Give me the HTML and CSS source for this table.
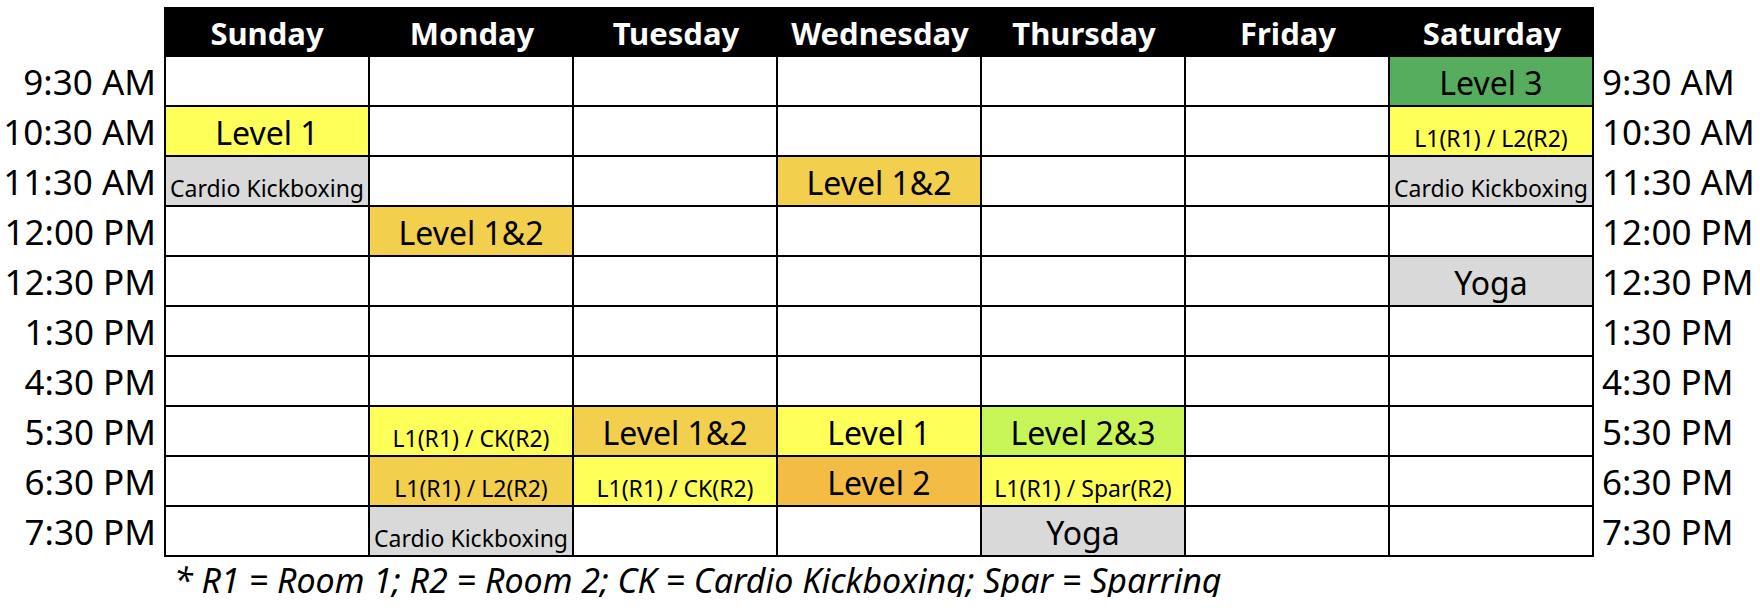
FILE: index.html
```html
<!DOCTYPE html>
<html lang="en">
<head>
<meta charset="utf-8">
<title>Class Schedule</title>
<link rel="stylesheet" href="styles.css">
</head>
<body>
<div class="page">
  <div class="schedule">
    <div class="corner"></div>
    <div class="day first">Sunday</div>
    <div class="day">Monday</div>
    <div class="day">Tuesday</div>
    <div class="day">Wednesday</div>
    <div class="day">Thursday</div>
    <div class="day">Friday</div>
    <div class="day">Saturday</div>
    <div class="corner"></div>

    <div class="time left">9:30 AM</div>
    <div class="cell first"></div><div class="cell"></div><div class="cell"></div><div class="cell"></div><div class="cell"></div><div class="cell"></div>
    <div class="cell big green">Level 3</div>
    <div class="time right">9:30 AM</div>

    <div class="time left">10:30 AM</div>
    <div class="cell first big yellow">Level 1</div>
    <div class="cell"></div><div class="cell"></div><div class="cell"></div><div class="cell"></div><div class="cell"></div>
    <div class="cell small yellow">L1(R1) / L2(R2)</div>
    <div class="time right">10:30 AM</div>

    <div class="time left">11:30 AM</div>
    <div class="cell first small gray">Cardio Kickboxing</div>
    <div class="cell"></div><div class="cell"></div>
    <div class="cell big gold">Level 1&amp;2</div>
    <div class="cell"></div><div class="cell"></div>
    <div class="cell small gray">Cardio Kickboxing</div>
    <div class="time right">11:30 AM</div>

    <div class="time left">12:00 PM</div>
    <div class="cell first"></div>
    <div class="cell big gold">Level 1&amp;2</div>
    <div class="cell"></div><div class="cell"></div><div class="cell"></div><div class="cell"></div><div class="cell"></div>
    <div class="time right">12:00 PM</div>

    <div class="time left">12:30 PM</div>
    <div class="cell first"></div><div class="cell"></div><div class="cell"></div><div class="cell"></div><div class="cell"></div><div class="cell"></div>
    <div class="cell big gray">Yoga</div>
    <div class="time right">12:30 PM</div>

    <div class="time left">1:30 PM</div>
    <div class="cell first"></div><div class="cell"></div><div class="cell"></div><div class="cell"></div><div class="cell"></div><div class="cell"></div><div class="cell"></div>
    <div class="time right">1:30 PM</div>

    <div class="time left">4:30 PM</div>
    <div class="cell first"></div><div class="cell"></div><div class="cell"></div><div class="cell"></div><div class="cell"></div><div class="cell"></div><div class="cell"></div>
    <div class="time right">4:30 PM</div>

    <div class="time left">5:30 PM</div>
    <div class="cell first"></div>
    <div class="cell small yellow">L1(R1) / CK(R2)</div>
    <div class="cell big gold">Level 1&amp;2</div>
    <div class="cell big yellow">Level 1</div>
    <div class="cell big lime">Level 2&amp;3</div>
    <div class="cell"></div><div class="cell"></div>
    <div class="time right">5:30 PM</div>

    <div class="time left">6:30 PM</div>
    <div class="cell first"></div>
    <div class="cell small gold">L1(R1) / L2(R2)</div>
    <div class="cell small yellow">L1(R1) / CK(R2)</div>
    <div class="cell big orange">Level 2</div>
    <div class="cell small yellow">L1(R1) / Spar(R2)</div>
    <div class="cell"></div><div class="cell"></div>
    <div class="time right">6:30 PM</div>

    <div class="time left">7:30 PM</div>
    <div class="cell first"></div>
    <div class="cell small gray">Cardio Kickboxing</div>
    <div class="cell"></div><div class="cell"></div>
    <div class="cell big gray">Yoga</div>
    <div class="cell"></div><div class="cell"></div>
    <div class="time right">7:30 PM</div>
  </div>
  <p class="note">* R1 = Room 1; R2 = Room 2; CK = Cardio Kickboxing; Spar = Sparring</p>
</div>
</body>
</html>
```

FILE: styles.css
```css
html, body {
  margin: 0;
  padding: 0;
  background: #ffffff;
}

body {
  font-family: "Noto Sans", "Open Sans", "DejaVu Sans", sans-serif;
  color: #000000;
}

.page {
  padding-top: 7px;
}

.schedule {
  display: grid;
  grid-template-columns: 164px 206px repeat(6, 204px) 1fr;
  grid-template-rows: repeat(11, 50px);
}

.corner {
  background: transparent;
}

.day {
  background: #000000;
  color: #ffffff;
  font-weight: 700;
  font-size: 31px;
  line-height: 1;
  display: flex;
  align-items: flex-end;
  justify-content: center;
  padding-bottom: 8px;
  box-sizing: border-box;
}

.time {
  font-size: 35px;
  line-height: 1;
  display: flex;
  align-items: flex-end;
  padding-bottom: 8px;
  box-sizing: border-box;
  white-space: nowrap;
}

.time.left {
  justify-content: flex-end;
  padding-right: 8px;
}

.time.right {
  justify-content: flex-start;
  padding-left: 8px;
}

.cell {
  box-sizing: border-box;
  border-right: 2px solid #000000;
  border-bottom: 2px solid #000000;
  display: flex;
  align-items: flex-end;
  justify-content: center;
  line-height: 1;
  white-space: nowrap;
  background: #ffffff;
}

.cell.first {
  border-left: 2px solid #000000;
}

.big {
  font-size: 32px;
  padding-bottom: 6px;
}

.small {
  font-size: 23px;
  padding-bottom: 5px;
}

.yellow { background: #ffff59; }
.gold { background: #f2cf4d; }
.orange { background: #f2bc45; }
.lime { background: #c7f457; }
.green { background: #57ad5e; }
.gray { background: #d9d9d9; }

.note {
  margin: 6px 0 0 174px;
  font-size: 34px;
  font-style: italic;
  line-height: 1;
}
```
